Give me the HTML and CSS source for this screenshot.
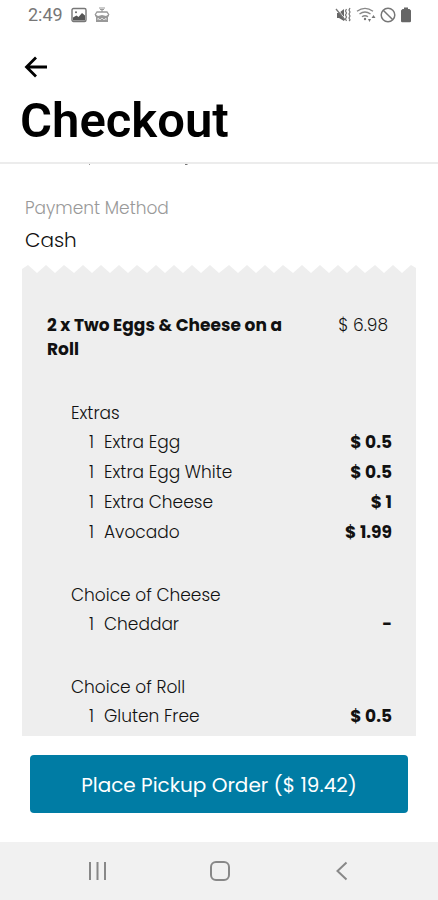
FILE: index.html
```html
<!DOCTYPE html>
<html lang="en">
<head>
<meta charset="utf-8">
<meta name="viewport" content="width=device-width, initial-scale=1">
<title>Checkout</title>
<link rel="stylesheet" href="styles.css">
</head>
<body>
<div class="screen">
  <div class="status">
    <span class="time">2:49</span>
    <svg class="status-icon" width="16" height="16" viewBox="0 0 16 16" aria-hidden="true">
      <rect x="1" y="1.5" width="14" height="13" rx="1.5" fill="none" stroke="#777" stroke-width="1.4"/>
      <circle cx="5" cy="5.200" r="1" fill="#666"/>
      <path d="M2 13.500V10.500L5.500 8.500L7.500 10L11 6L14 8.500V13.500Z" fill="#555"/>
    </svg>
    <svg class="status-icon second" width="16" height="16" viewBox="0 0 16 16" aria-hidden="true">
      <path d="M5 1h6M6 2.500h4M8 2v3" stroke="#999" stroke-width="1.200" fill="none"/>
      <path d="M1 8L3 5h10l2 3" stroke="#999" stroke-width="1.300" fill="none"/>
      <path d="M1 7l3 2 4-1 4 1 3-2v2l-1 1v5H2v-5L1 9Z" fill="#999"/>
      <path d="M4 13v-2l2 2 2-2 2 2 2-2v2" stroke="#ddd" fill="none"/>
    </svg>
    <span class="spacer"></span>
    <svg class="status-icon" width="18" height="16" viewBox="0 0 18 16" aria-hidden="true">
      <path d="M3 6h2l5-4v12L5 11H3Z" fill="#666"/>
      <path d="M3 1.500L12 13" stroke="#fff" stroke-width="1"/>
      <path d="M2 2l9 11" stroke="#777" stroke-width="1.300"/>
      <path d="M12.500 2l-1 2 1 2-1 2 1 2-1 2 1 2M16 1l-1 2 1 2-1 2 1 2-1 2 1 2-1 1" stroke="#777" stroke-width="1.200" fill="none"/>
    </svg>
    <svg class="status-icon" width="20" height="16" viewBox="0 0 20 16" aria-hidden="true">
      <path d="M1 4.200Q9 -1.500 17 4.200M3.500 7Q9 3 14.500 7M6 9.800Q9 7.600 12 9.800" stroke="#888" stroke-width="1.400" fill="none"/>
      <circle cx="9" cy="12" r="1.200" fill="#777"/>
      <path d="M12 12h3l-1.500 3ZM15.500 11h4L17.500 8Z" fill="#777"/>
    </svg>
    <svg class="status-icon" width="16" height="16" viewBox="0 0 16 16" aria-hidden="true">
      <circle cx="8" cy="8" r="6.800" stroke="#777" stroke-width="1.500" fill="none"/>
      <path d="M3.200 3.200l9.600 9.600" stroke="#777" stroke-width="1.500"/>
    </svg>
    <svg class="status-icon battery" width="10" height="16" viewBox="0 0 10 16" aria-hidden="true">
      <path d="M3 .5h4V2h1.500L10 3.500V14a1.200 1.200 0 0 1-1.200 1.200H1.200A1.200 1.200 0 0 1 0 14V3.500L1.500 2H3Z" fill="#666"/>
    </svg>
  </div>

  <header class="header">
    <button class="back" type="button" aria-label="Back">
      <svg width="24" height="22" viewBox="0 0 24 22" aria-hidden="true">
        <path d="M12 1.500L2.500 11L12 20.500M2.500 11H23" stroke="#000" stroke-width="2.800" fill="none"/>
      </svg>
    </button>
    <h1 class="title">Checkout</h1>
  </header>

  <main class="content">
    <svg class="cut-line" width="200" height="2" viewBox="0 0 200 2" aria-hidden="true">
      <path d="M89 0h1v1h-1Z" fill="#999"/>
      <path d="M185 0h3l-1 1h-2Z" fill="#777"/>
    </svg>
    <section class="payment">
      <h2 class="payment-label">Payment Method</h2>
      <p class="payment-value">Cash</p>
    </section>

    <section class="receipt">
      <svg class="teeth" viewBox="0 0 394 9" preserveAspectRatio="none" aria-hidden="true">
        <path fill="#eee" d="M0 9V4L6 0L15 8L24 0L33 8L42 0L52 8L61 0L70 8L79 0L88 8L97 0L106 8L115 0L125 8L134 0L143 8L152 0L161 8L170 0L179 8L188 0L197 8L207 0L216 8L225 0L234 8L243 0L252 8L261 0L271 8L280 0L289 8L298 0L307 8L316 0L325 8L334 0L343 8L353 0L362 8L371 0L380 8L389 0L394 3V9Z"/>
      </svg>
      <div class="receipt-body">
        <div class="item">
          <h3 class="item-name">2 x Two Eggs &amp; Cheese on a Roll</h3>
          <span class="item-price">$ 6.98</span>
        </div>
        <div class="group">
          <h4 class="group-name">Extras</h4>
          <ul class="options">
            <li class="option"><span class="qty">1</span><span>Extra Egg</span><b class="price">$ 0.5</b></li>
            <li class="option"><span class="qty">1</span><span>Extra Egg White</span><b class="price">$ 0.5</b></li>
            <li class="option"><span class="qty">1</span><span>Extra Cheese</span><b class="price">$ 1</b></li>
            <li class="option"><span class="qty">1</span><span>Avocado</span><b class="price">$ 1.99</b></li>
          </ul>
        </div>
        <div class="group">
          <h4 class="group-name">Choice of Cheese</h4>
          <ul class="options">
            <li class="option"><span class="qty">1</span><span>Cheddar</span><b class="price">-</b></li>
          </ul>
        </div>
        <div class="group">
          <h4 class="group-name">Choice of Roll</h4>
          <ul class="options">
            <li class="option"><span class="qty">1</span><span>Gluten Free</span><b class="price">$ 0.5</b></li>
          </ul>
        </div>
      </div>
    </section>
  </main>

  <footer class="footer">
    <button class="order" type="button">Place Pickup Order ($ 19.42)</button>
  </footer>

  <nav class="system-nav" aria-label="System">
    <button class="nav-button" type="button" aria-label="Recent apps">
      <svg width="20" height="20" viewBox="0 0 20 20" aria-hidden="true"><path d="M2 1v18M9.500 1v18M17 1v18" stroke="#888" stroke-width="2"/></svg>
    </button>
    <button class="nav-button" type="button" aria-label="Home">
      <svg width="20" height="20" viewBox="0 0 20 20" aria-hidden="true"><rect x="1" y="1" width="18" height="18" rx="5" stroke="#888" stroke-width="2" fill="none"/></svg>
    </button>
    <button class="nav-button" type="button" aria-label="Back">
      <svg width="20" height="20" viewBox="0 0 20 20" aria-hidden="true"><path d="M14.500 1.500L5.500 10L14.500 18.500" stroke="#888" stroke-width="2" fill="none"/></svg>
    </button>
  </nav>
</div>
</body>
</html>
```
FILE: styles.css
```css
* {
  box-sizing: border-box;
}

body {
  margin: 0;
  background: #fff;
  color: #111;
  font-family: Poppins, Inter, "Open Sans", sans-serif;
  font-size: 17px;
  font-weight: 300;
}

h1, h2, h3, h4, p, ul {
  margin: 0;
  padding: 0;
}

button {
  border: 0;
  padding: 0;
  background: none;
  font-family: inherit;
}

svg {
  display: block;
}

.screen {
  display: flex;
  flex-direction: column;
  height: 100vh;
}

.status {
  display: flex;
  align-items: center;
  gap: 4px;
  padding: 5px 27px 0 28px;
  line-height: 20px;
}

.time {
  margin-right: 4px;
  font-family: Roboto, sans-serif;
  font-size: 18px;
  font-weight: 400;
  color: #777;
}

.second {
  margin-left: 3px;
}

.spacer {
  flex: 1;
}

.battery {
  margin-left: 1px;
}

.header {
  padding: 31px 20px 12px;
  border-bottom: 2px solid #ececec;
}

.back {
  display: block;
  padding: 0 4px;
}

.title {
  margin-top: 13px;
  font-family: Roboto, sans-serif;
  font-size: 49px;
  line-height: 59px;
  font-weight: 600;
  color: #000;
}

.content {
  flex: 1;
  min-height: 0;
  overflow: hidden;
}

.payment {
  padding: 30px 25px 0;
}

.payment-label {
  font-size: 17px;
  line-height: 24px;
  font-weight: 300;
  color: #999;
}

.payment-value {
  margin-top: 7px;
  font-size: 20px;
  line-height: 26px;
}

.receipt {
  margin: 12px 22px 0;
}

.teeth {
  width: 100%;
  height: 9px;
}

.receipt-body {
  padding: 39px 24px 60px 25px;
  background: #eee;
}

.item {
  display: flex;
  justify-content: space-between;
  align-items: flex-start;
  gap: 32px;
  padding-right: 4px;
  line-height: 24px;
}

.item-name {
  max-width: 250px;
  font-size: 17px;
  font-weight: 700;
}

.item-price {
  white-space: nowrap;
}

.group {
  margin: 34px 0 0 24px;
}

.item + .group {
  margin-top: 38px;
}

.group-name {
  font-size: 17px;
  line-height: 28px;
  font-weight: 300;
}

.options {
  list-style: none;
}

.option {
  display: grid;
  grid-template-columns: 15px 1fr auto;
  padding-left: 18px;
  line-height: 30px;
}

.price {
  font-weight: 700;
}

.footer {
  padding: 19px 30px 29px;
}

.order {
  width: 100%;
  padding: 17px 16px 15px;
  border-radius: 4px;
  background: #007ca4;
  color: #fff;
  font-size: 20px;
  line-height: 26px;
  font-weight: 400;
}

.system-nav {
  display: flex;
  justify-content: space-between;
  padding: 19px 84px 19px 86px;
  background: #f1f1f1;
}

.nav-button {
  padding: 0 2px;
}
```
